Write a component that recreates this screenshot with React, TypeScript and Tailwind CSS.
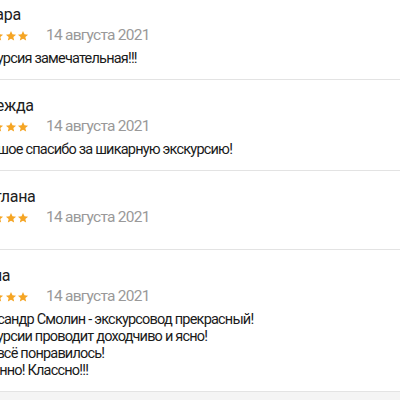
const reviews = [
  { name: "Тамара", date: "14 августа 2021", text: ["Экскурсия замечательная!!!"] },
  { name: "Надежда", date: "14 августа 2021", text: ["Большое спасибо за шикарную экскурсию!"] },
  { name: "Светлана", date: "14 августа 2021", text: [] as string[] },
  {
    name: "Елена",
    date: "14 августа 2021",
    text: [
      "Александр Смолин - экскурсовод прекрасный!",
      "Экскурсии проводит доходчиво и ясно!",
      "Нам всё понравилось!",
      "Отменно! Классно!!!",
    ],
  },
];

const Star = () => (
  <svg viewBox="0 0 24 24" className="w-[12px] h-[12px] shrink-0" fill="#f5a524">
    <path d="M12 2l2.95 6.6 7.2.65-5.45 4.75 1.62 7.05L12 17.3l-6.32 3.75L7.3 14 1.85 9.25l7.2-.65z" />
  </svg>
);

const App = () => {
  return (
    <div className="w-[400px] h-[400px] overflow-hidden bg-white font-['Roboto',sans-serif]">
      <div className="-mt-[11px] ml-[-33px]">
        {reviews.map((r) => (
          <div key={r.name} className="border-b border-[#e3e3e3] pt-[16px] pb-[12px]">
            <div className="text-[16px] leading-[20px] tracking-[-0.3px] text-[#202020]">{r.name}</div>
            <div className={`flex items-center h-[22px] ${r.text.length ? "" : "mb-[8px]"}`}>
              <div className="flex items-center gap-[0.5px]">
                <Star />
                <Star />
                <Star />
                <Star />
                <Star />
              </div>
              <span className="ml-[17px] text-[15.5px] tracking-[-0.75px] text-[#999999]">{r.date}</span>
            </div>
            {r.text.length > 0 && (
              <div className="mt-[3px] text-[14.5px] leading-[17px] tracking-[-0.8px] text-[#1a1a1a]">
                {r.text.map((t) => (
                  <div key={t}>{t}</div>
                ))}
              </div>
            )}
          </div>
        ))}
        <div className="h-[40px] bg-[#f4f4f4]" />
      </div>
    </div>
  );
};

export default App;
